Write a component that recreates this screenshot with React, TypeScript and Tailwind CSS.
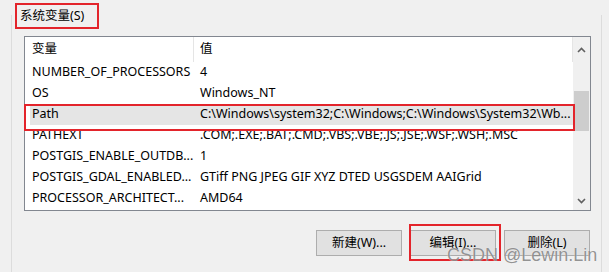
import React from 'react';

const rows = [
  { name: 'NUMBER_OF_PROCESSORS', value: '4' },
  { name: 'OS', value: 'Windows_NT' },
  { name: 'Path', value: 'C:\\Windows\\system32;C:\\Windows;C:\\Windows\\System32\\Wb...', selected: true },
  { name: 'PATHEXT', value: '.COM;.EXE;.BAT;.CMD;.VBS;.VBE;.JS;.JSE;.WSF;.WSH;.MSC' },
  { name: 'POSTGIS_ENABLE_OUTDB...', value: '1' },
  { name: 'POSTGIS_GDAL_ENABLED...', value: 'GTiff PNG JPEG GIF XYZ DTED USGSDEM AAIGrid' },
  { name: 'PROCESSOR_ARCHITECT...', value: 'AMD64' },
];

function Chevron({ up }: { up?: boolean }) {
  return (
    <svg width="9" height="6" viewBox="0 0 9 6" className="block">
      <polyline
        points={up ? '1,5 4.5,1.5 8,5' : '1,1 4.5,4.5 8,1'}
        fill="none"
        stroke="#606060"
        strokeWidth="1.6"
      />
    </svg>
  );
}

export default function App() {
  return (
    <div className="relative w-[609px] h-[272px] overflow-hidden bg-[#f0f0f0] text-[12.5px] text-black font-['Noto_Sans','Noto_Sans_CJK_SC',sans-serif]">
      {/* group box frame */}
      <div className="absolute left-[11px] top-[15px] bottom-0 w-[591px] border-l border-r border-[#dcdcdc]" />

      {/* group label */}
      <div className="relative ml-[15px] mt-[3px] w-[84px] h-[26px] border-2 border-[#e3242b] flex items-center pl-[3px] bg-[#f0f0f0] whitespace-nowrap">
        系统变量(S)
      </div>

      {/* list view */}
      <div className="relative ml-[24px] mt-[7px] w-[567px] h-[175px] border border-[#828790] bg-white flex">
        <div className="flex-1 flex flex-col">
          <div className="h-[25px] flex items-center">
            <div className="w-[169px] h-full pl-[7px] flex items-center border-r border-[#e5e5e5]">变量</div>
            <div className="flex-1 h-full pl-[6px] flex items-center border-r border-[#e5e5e5]">值</div>
          </div>
          {rows.map((r) => (
            <div
              key={r.name}
              className={`h-[21px] flex items-center whitespace-nowrap ${r.selected ? 'bg-[#e5e5e5] ml-[5px]' : ''}`}
            >
              <div className={`${r.selected ? 'w-[164px] pl-[2px]' : 'w-[169px] pl-[7px]'} overflow-hidden`}>{r.name}</div>
              <div className="flex-1 pl-[6px] overflow-hidden">{r.value}</div>
            </div>
          ))}
        </div>
        <div className="w-[17px] bg-[#f0f0f0] flex flex-col items-center">
          <div className="h-[17px] mt-[4px] flex items-center justify-center">
            <Chevron up />
          </div>
          <div className="w-[15px] h-[40px] mt-[33px] bg-[#cdcdcd]" />
          <div className="flex-1" />
          <div className="h-[17px] mb-[1px] flex items-center justify-center">
            <Chevron />
          </div>
        </div>
      </div>

      {/* buttons */}
      <div className="relative ml-[316px] mt-[19px] flex gap-[8px]">
        {['新建(W)...', '编辑(I)...', '删除(L)'].map((b) => (
          <div
            key={b}
            className="w-[86px] h-[26px] border border-[#adadad] bg-[#e1e1e1] flex items-center justify-center"
          >
            {b}
          </div>
        ))}
      </div>

      {/* annotations */}
      <div className="absolute left-[24px] top-[104px] w-[551px] h-[27px] border-2 border-[#e3242b]" />
      <div className="absolute left-[409px] top-[224px] w-[92px] h-[37px] border-2 border-[#e3242b]" />

      {/* watermark */}
      <div className="absolute left-[447px] top-[246px] text-[18px] leading-none whitespace-nowrap text-[rgba(100,100,100,0.7)] [text-shadow:0_0_1px_rgba(255,255,255,0.9)] font-['Liberation_Sans',sans-serif]">
        CSDN @Lewin.Lin
      </div>
    </div>
  );
}
